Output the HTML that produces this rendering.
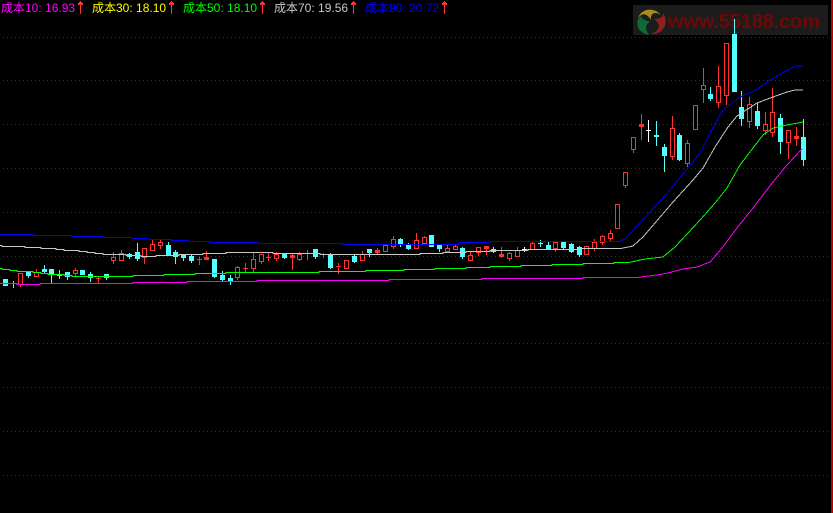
<!DOCTYPE html>
<html>
<head>
<meta charset="utf-8">
<style>
html,body{margin:0;padding:0;background:#000;}
body{width:833px;height:513px;position:relative;overflow:hidden;}
.t{position:absolute;top:1px;height:14px;line-height:14px;font-size:12px;font-family:"Liberation Sans","WenQuanYi Zen Hei","Noto Sans CJK SC",sans-serif;white-space:pre;}
svg{position:absolute;left:0;top:0;}
</style>
</head>
<body>
<svg width="833" height="513" viewBox="0 0 833 513">
<defs><pattern id="d" width="4" height="1" patternUnits="userSpaceOnUse"><rect x="3" width="1" height="1" fill="#a00000"/></pattern></defs>
<g fill="url(#d)" shape-rendering="crispEdges">
<rect y="37" width="831" height="1"/><rect y="80" width="831" height="1"/><rect y="124" width="831" height="1"/><rect y="168" width="831" height="1"/><rect y="212" width="831" height="1"/><rect y="256" width="831" height="1"/><rect y="300" width="831" height="1"/><rect y="343" width="831" height="1"/><rect y="387" width="831" height="1"/><rect y="431" width="831" height="1"/><rect y="475" width="831" height="1"/>
</g>
<rect x="831" y="0" width="2" height="513" fill="#c00000"/>
<rect x="633" y="5" width="195" height="30" fill="#1c1c1c"/>
<path d="M638 19C640 9 653 6 661 15C655 11 650 13 651 20C646 12 641 13 638 19Z" fill="#a88a1e"/>
<path d="M663 13C670 24 662 35 651 34C658 32 663 25 654 19C660 19 664 17 663 13Z" fill="#8e2020"/>
<path d="M641 16C634 22 637 33 649 35C645 30 645 24 650 22C646 20 642 20 641 16Z" fill="#0f6a38"/>
<text x="668" y="28" font-family="Liberation Sans" font-weight="bold" font-size="20" fill="#6e0808" textLength="152">www.55188.com</text>

<g fill="none" shape-rendering="crispEdges">
<path stroke="#54ffff" d="M13.5 281V288M28.5 272V278M44.5 265V273M51.5 269V283M59.5 270V279M67.5 272V280M90.5 272V282M106.5 274V280M129.5 253V259M137.5 243V261M168.5 242V255M175.5 250V264M183.5 254V261M191.5 254V263M214.5 259V278M222.5 271V282M230.5 275V285M284.5 254V259M315.5 249V259M330.5 253V269M354.5 255V263M369.5 249V257M400.5 238V247M408.5 243V250M439.5 244V252M462.5 247V259M493.5 247V253M540.5 240V247M548.5 242V249M563.5 242V249M571.5 243V253M579.5 246V257M656.5 121V146M664.5 144V172M679.5 133V161M710.5 87V101M734.5 19V92M741.5 91V126M757.5 103V129M780.5 114V154M803.5 119V166"/>
<path stroke="#ff3232" d="M20.5 273V287M36.5 269V277M75.5 268V277M113.5 252V264M121.5 250V261M144.5 248V264M152.5 240V251M160.5 240V249M237.5 266V280M253.5 253V272M261.5 254V264M276.5 252V261M299.5 252V261M362.5 251V261M393.5 236V249M416.5 233V249M424.5 236V244M447.5 244V252M455.5 245V250M470.5 252V261M478.5 247V256M509.5 252V261M517.5 247V257M532.5 242V250M555.5 242V252M594.5 239V251M602.5 235V245M610.5 230V241M625.5 172V188M633.5 137V153M672.5 116V160M687.5 140V167M703.5 68V103M718.5 66V108M726.5 43V105M749.5 97V128M765.5 112V135M772.5 88V137M788.5 130V159M98.5 276V283M199.5 257V265M206.5 251V260M245.5 263V272M268.5 253V261M292.5 253V270M307.5 250V260M338.5 263V274M377.5 248V255M486.5 246V255M501.5 247V258M641.5 114V140M796.5 127V146M323.5 253V258"/>
<path stroke="#fff" d="M524.5 247V252M648.5 120V142"/>
</g>

<path shape-rendering="crispEdges" fill="#54ffff" d="M3 279h5v7h-5zM11 283h5v1h-5zM26 272h5v4h-5zM42 269h5v3h-5zM49 269h5v6h-5zM57 274h5v2h-5zM65 272h5v5h-5zM80 270h5v5h-5zM88 274h5v4h-5zM104 274h5v4h-5zM127 254h5v3h-5zM135 252h5v7h-5zM166 245h5v10h-5zM173 252h5v5h-5zM181 254h5v4h-5zM189 256h5v5h-5zM212 259h5v18h-5zM220 275h5v5h-5zM228 278h5v4h-5zM282 254h5v4h-5zM313 249h5v8h-5zM328 255h5v13h-5zM352 256h5v6h-5zM367 249h5v4h-5zM398 239h5v6h-5zM406 245h5v4h-5zM429 235h5v12h-5zM437 244h5v5h-5zM460 248h5v9h-5zM491 249h5v3h-5zM538 243h5v1h-5zM546 245h5v4h-5zM561 242h5v6h-5zM569 244h5v8h-5zM577 247h5v8h-5zM654 135h5v2h-5zM662 147h5v9h-5zM677 135h5v25h-5zM708 94h5v5h-5zM732 34h5v58h-5zM739 107h5v12h-5zM755 111h5v15h-5zM778 118h5v24h-5zM801 137h5v23h-5z"/>

<path shape-rendering="crispEdges" fill="#ff3232" d="M96 278h5v1h-5zM197 259h5v1h-5zM204 257h5v3h-5zM243 268h5v1h-5zM266 257h5v1h-5zM290 255h5v3h-5zM305 253h5v1h-5zM336 266h5v1h-5zM375 250h5v3h-5zM484 246h5v3h-5zM499 254h5v3h-5zM639 124h5v3h-5zM794 136h5v3h-5z"/>
<path shape-rendering="crispEdges" fill="#fff" d="M522 249h5v1h-5zM646 130h5v1h-5z"/>

<path shape-rendering="crispEdges" fill="#ff3232" d="M18 273h5v12h-5zM34 272h5v5h-5zM73 270h5v4h-5zM111 257h5v4h-5zM119 253h5v8h-5zM142 248h5v10h-5zM150 244h5v7h-5zM158 242h5v4h-5zM235 267h5v11h-5zM251 259h5v10h-5zM259 254h5v8h-5zM274 254h5v5h-5zM297 254h5v6h-5zM344 260h5v9h-5zM360 254h5v7h-5zM383 245h5v7h-5zM391 239h5v8h-5zM414 240h5v9h-5zM422 237h5v7h-5zM445 248h5v4h-5zM453 246h5v4h-5zM468 255h5v6h-5zM476 247h5v6h-5zM507 253h5v6h-5zM515 250h5v7h-5zM530 243h5v7h-5zM553 242h5v7h-5zM584 246h5v9h-5zM592 242h5v7h-5zM600 236h5v7h-5zM608 233h5v6h-5zM615 204h5v25h-5zM623 172h5v14h-5zM631 137h5v13h-5zM670 128h5v29h-5zM685 143h5v21h-5zM693 105h5v25h-5zM701 85h5v5h-5zM716 86h5v17h-5zM724 43h5v53h-5zM747 104h5v18h-5zM763 124h5v7h-5zM770 112h5v21h-5zM786 130h5v13h-5z"/>
<path shape-rendering="crispEdges" fill="#000" d="M19 274h3v10h-3zM35 273h3v3h-3zM74 271h3v2h-3zM112 258h3v2h-3zM120 254h3v6h-3zM143 249h3v8h-3zM151 245h3v5h-3zM159 243h3v2h-3zM236 268h3v9h-3zM252 260h3v8h-3zM260 255h3v6h-3zM275 255h3v3h-3zM298 255h3v4h-3zM345 261h3v7h-3zM361 255h3v5h-3zM384 246h3v5h-3zM392 240h3v6h-3zM415 241h3v7h-3zM423 238h3v5h-3zM446 249h3v2h-3zM454 247h3v2h-3zM469 256h3v4h-3zM477 248h3v4h-3zM508 254h3v4h-3zM516 251h3v5h-3zM531 244h3v5h-3zM554 243h3v5h-3zM585 247h3v7h-3zM593 243h3v5h-3zM601 237h3v5h-3zM609 234h3v4h-3zM616 205h3v23h-3zM624 173h3v12h-3zM632 138h3v11h-3zM671 129h3v27h-3zM686 144h3v19h-3zM694 106h3v23h-3zM702 86h3v3h-3zM717 87h3v15h-3zM725 44h3v51h-3zM748 105h3v16h-3zM764 125h3v5h-3zM771 113h3v19h-3zM787 131h3v11h-3z"/>

<g fill="none" stroke-width="1" shape-rendering="crispEdges">
<path stroke="#0000ff" d="M0 234.5H33V235.5H72V236.5H103V237.5H133V238.5H149V239.5H172V240.5H188V241.5H210V242.5H258V243.5H343V244.5H459V242.5H490V241.5H619L625 239L650 212L670 190L678 180L700 153L710 133L723 110L740 97L756 90L770 80L795 66H803"/>
<path stroke="#c8c8c8" d="M0 245.5H2V246.5H25V247.5H41V248.5H56V249.5H64V250.5H79V251.5H87V252.5H95V253.5H103V254.5H126V255.5H141V256.5H156V255.5H179V254.5H203V253.5H226V252.5H273V253.5H320V254.5H420V253.5H443V252.5H466V251.5H490V250.5H528V249.5H581V248.5H621L633 246L643 237L673 202L693 180L703 168L715 147L728 127L737 116L757 103L773 97L787 92L795 90H803"/>
<path stroke="#00ff00" d="M0 268.5H2V269.5H10V270.5H17V271.5H33V272.5H41V273.5H48V274.5H64V275.5H72V276.5H133V275.5H164V274.5H195V273.5H226V272.5H319V271.5H366V270.5H404V269.5H435V268.5H466V267.5H490V266.5H521V265.5H552V264.5H583V263.5H614V262.5H629L645 259L663 257L675 247L700 220L715 203L727 188L740 165L753 148L763 135L773 128L787 125L803 122"/>
<path stroke="#ff00ff" d="M0 283.5H17V284.5H40V283.5H133V282.5H187V281.5H257V280.5H389V279.5H482V278.5H583V277.5H637L657 275L668 273L683 269L697 267L710 262L722 248L737 228L753 208L773 182L787 165L802 149"/>
</g>

<g fill="#ff3232" shape-rendering="crispEdges">
<path d="M80 1h1v1h1v1h1v2h-2v9h-1v-9h-2v-2h1v-1h1z"/>
<path d="M171 1h1v1h1v1h1v2h-2v9h-1v-9h-2v-2h1v-1h1z"/>
<path d="M262 1h1v1h1v1h1v2h-2v9h-1v-9h-2v-2h1v-1h1z"/>
<path d="M353 1h1v1h1v1h1v2h-2v9h-1v-9h-2v-2h1v-1h1z"/>
<path d="M444 1h1v1h1v1h1v2h-2v9h-1v-9h-2v-2h1v-1h1z"/>
</g>
</svg>
<div class="t" style="left:1px;color:#ff00ff">成本10: 16.93</div>
<div class="t" style="left:92px;color:#ffff00">成本30: 18.10</div>
<div class="t" style="left:183px;color:#00ff00">成本50: 18.10</div>
<div class="t" style="left:274px;color:#c8c8c8">成本70: 19.56</div>
<div class="t" style="left:365px;color:#0000ff">成本90: 20.72</div>
</body>
</html>
